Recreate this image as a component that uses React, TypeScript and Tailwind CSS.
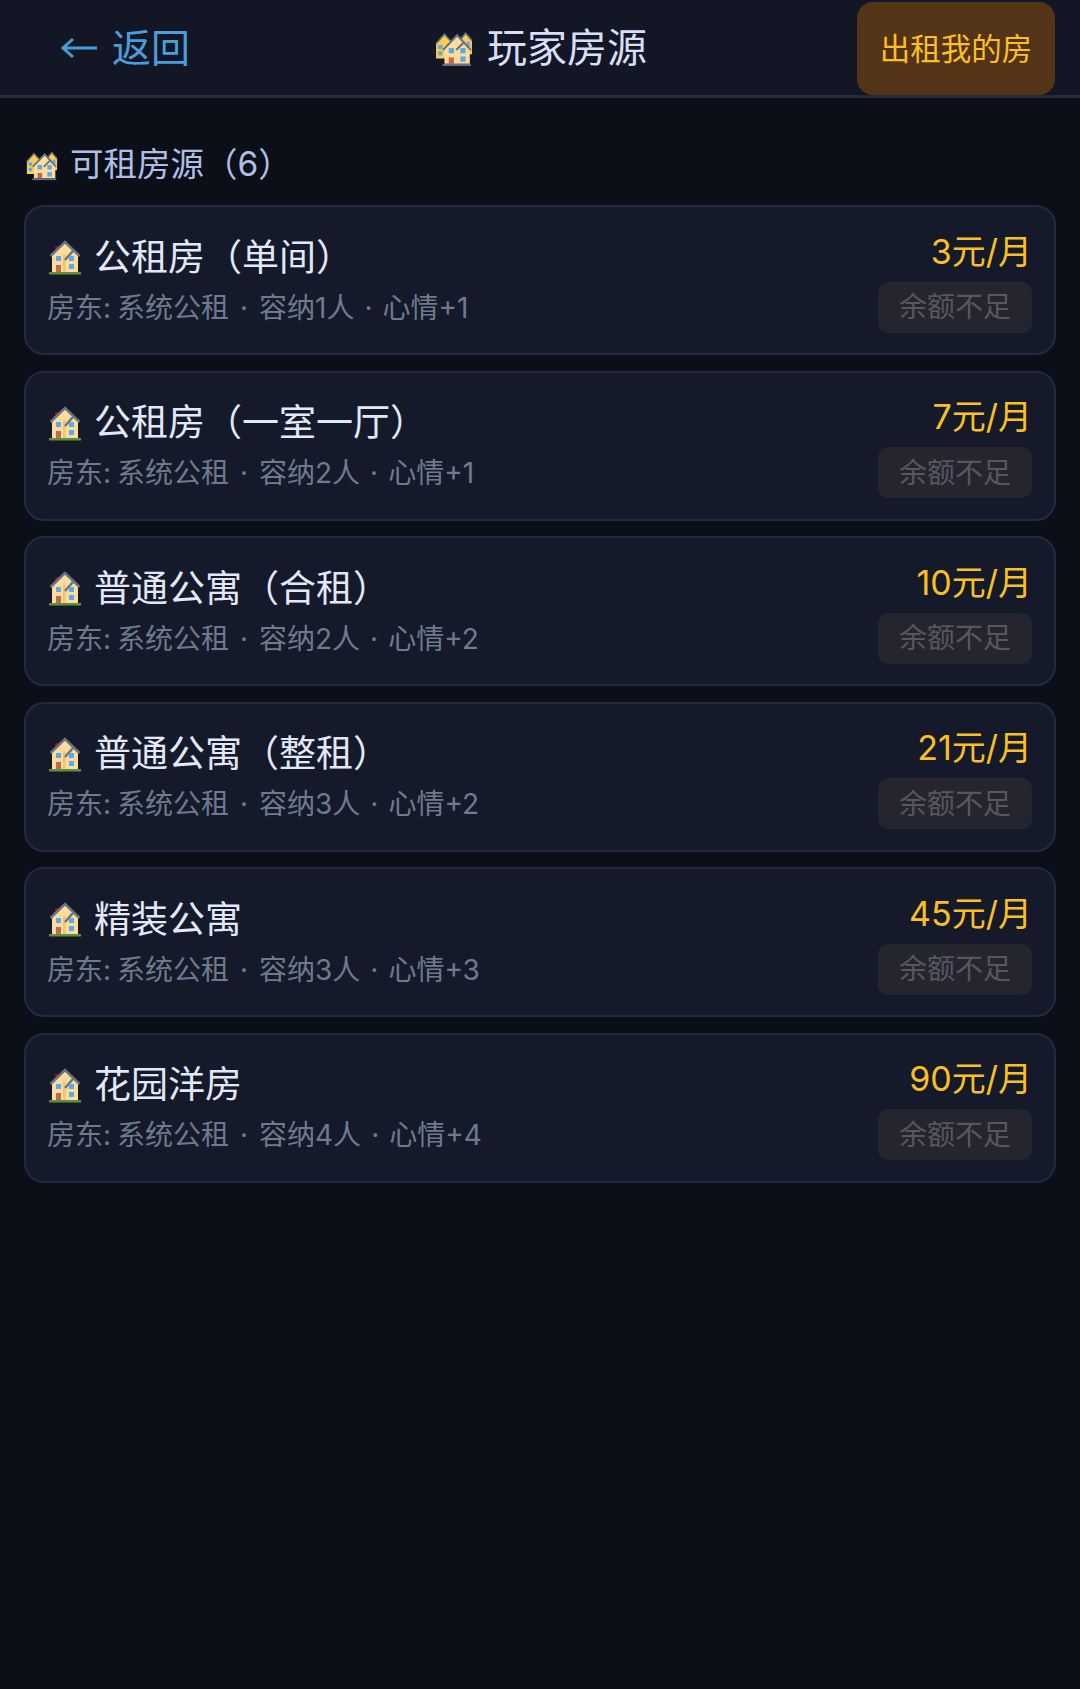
const font = { fontFamily: '"Inter", "Noto Sans CJK SC", sans-serif' };

function House() {
  return (
    <svg width="32" height="35" viewBox="0 0 32 35" className="shrink-0">
      <rect x="6" y="6" width="3.500" height="8" fill="#a0041e" />
      <path d="M3 15 L16 3 L29 15 V32 H3 Z" fill="#ffdc9e" />
      <rect x="14" y="14" width="2.500" height="18" fill="#f5c36f" />
      <path d="M1.500 16 L16 2 L30.500 16" fill="none" stroke="#66757f" strokeWidth="2.500" />
      <path d="M16 20 L24 11" fill="none" stroke="#66757f" strokeWidth="2.500" />
      <rect x="7" y="16" width="5" height="5" fill="#55acee" />
      <rect x="20" y="16" width="5" height="5" fill="#55acee" />
      <rect x="20" y="24" width="5" height="5" fill="#55acee" />
      <rect x="7" y="25" width="5" height="7" fill="#c1694f" />
      <rect x="0" y="32" width="32" height="2.500" fill="#5c913b" />
    </svg>
  );
}

function Houses({ w }: { w: number }) {
  return (
    <svg width={w} height={w} viewBox="0 0 36 36" className="shrink-0">
      <path d="M1 14 L9 5 L17 14 V28 H1 Z" fill="#ffcc4d" />
      <path d="M24 12 L29 4 L35 11 V24 H24 Z" fill="#ffcc4d" />
      <path d="M1 14 L9 5 L17 14" fill="none" stroke="#66757f" strokeWidth="1.500" />
      <path d="M24 10 L29 4 L35 11" fill="none" stroke="#66757f" strokeWidth="1.500" />
      <rect x="3" y="15" width="4" height="4" fill="#55acee" />
      <rect x="3" y="21" width="4" height="4" fill="#55acee" />
      <rect x="30" y="12" width="3" height="5" fill="#55acee" />
      <rect x="11" y="16" width="8" height="12" fill="#7a1f12" />
      <path d="M9 19 L21 6 L33 19 V33 H9 Z" fill="#ffdc9e" />
      <path d="M7.500 20 L21 6 L34 20" fill="none" stroke="#66757f" strokeWidth="2" />
      <path d="M20 20 L28 12" fill="none" stroke="#66757f" strokeWidth="2" />
      <rect x="13" y="18" width="5" height="5" fill="#55acee" />
      <rect x="24" y="18" width="5" height="5" fill="#55acee" />
      <rect x="24" y="26" width="5" height="5" fill="#55acee" />
      <rect x="13" y="27" width="5" height="6" fill="#c1694f" />
      <rect x="7" y="33" width="27" height="2" fill="#66757f" />
    </svg>
  );
}

const rooms = [
  { name: "公租房（单间）", cap: "容纳1人", mood: "心情+1", price: "3元/月" },
  { name: "公租房（一室一厅）", cap: "容纳2人", mood: "心情+1", price: "7元/月" },
  { name: "普通公寓（合租）", cap: "容纳2人", mood: "心情+2", price: "10元/月" },
  { name: "普通公寓（整租）", cap: "容纳3人", mood: "心情+2", price: "21元/月" },
  { name: "精装公寓", cap: "容纳3人", mood: "心情+3", price: "45元/月" },
  { name: "花园洋房", cap: "容纳4人", mood: "心情+4", price: "90元/月" },
];

export default function App() {
  return (
    <div className="min-h-[1689px] w-[1080px] bg-[#0c0f18]" style={font}>
      <header className="flex h-[98px] items-center border-b-[3px] border-[#252a3e] bg-[#131625] pl-[60px] pr-[24px]">
        <div className="flex w-[375px] items-center gap-[14px] text-[39px] leading-none text-[#4a9edd]">
          <svg width="38" height="24" viewBox="0 0 38 24" className="shrink-0">
            <path d="M37 12 H3 M13 3 L3 12 L13 21" fill="none" stroke="#4a9edd" strokeWidth="3" />
          </svg>
          <span>返回</span>
        </div>
        <div className="flex items-center gap-[14px] text-[40px] leading-none text-[#d8def5]">
          <Houses w={38} />
          <span>玩家房源</span>
        </div>
        <div className="ml-auto flex h-[93px] w-[198px] -translate-x-px translate-y-px items-center justify-center rounded-[16px] bg-[#533417] text-[30.500px] text-[#fbbf24]">
          出租我的房
        </div>
      </header>
      <main className="px-[24px] pt-[42px]">
        <div className="flex h-[50px] items-center gap-[12px] pl-[2px] text-[33.500px] leading-none text-[#aebfe6]">
          <Houses w={32} />
          <span>可租房源（6）</span>
        </div>
        <div className="mt-[15px] flex flex-col gap-[15.500px]">
          {rooms.map((r) => (
            <div
              key={r.name}
              className="flex h-[150px] items-center justify-between rounded-[20px] border-2 border-[#212a40] bg-[#141a2a] pl-[21px] pr-[22px]"
            >
              <div>
                <div className="flex items-center gap-[13px] pl-[2px] text-[37px] leading-[50px] text-[#e2e8f8]">
                  <House />
                  <span>{r.name}</span>
                </div>
                <div className="mt-[5px] flex items-center text-[28px] leading-[40px] text-[#6f7a8d]">
                  <span className="[word-spacing:-2px]">房东: 系统公租</span>
                  <span className="mx-[11px]">·</span>
                  <span>{r.cap}</span>
                  <span className="mx-[10px]">·</span>
                  <span>{r.mood}</span>
                </div>
              </div>
              <div className="flex translate-y-px flex-col items-end gap-[12px]">
                <div className="translate-y-[2px] text-[34px] leading-[40px] text-[#fbbf24]">{r.price}</div>
                <div className="flex h-[51px] w-[154px] items-center justify-center rounded-[10px] bg-[#24252f] text-[28px] text-[#56575f]">
                  余额不足
                </div>
              </div>
            </div>
          ))}
        </div>
      </main>
    </div>
  );
}
